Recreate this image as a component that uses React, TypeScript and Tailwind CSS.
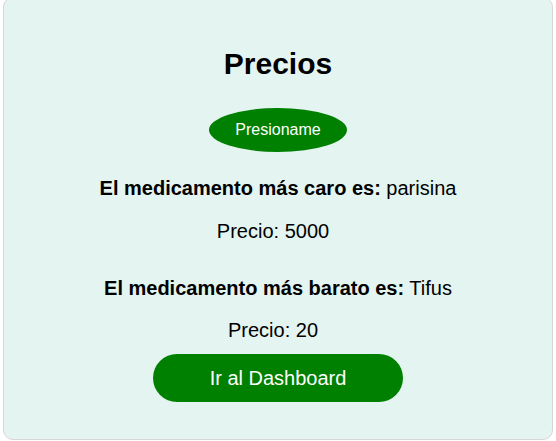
export default function App() {
  return (
    <div className="pl-[3px] font-['Liberation_Sans',Arial,sans-serif] text-black">
      <div className="-mt-[3px] w-[550px] h-[443px] rounded-[10px] border border-[#d6d6d6] bg-[#e4f4f0] flex flex-col items-center pt-[48px]">
        <h1 className="text-[30px] font-bold leading-[35px]">Precios</h1>
        <button className="mt-[27px] w-[138px] h-[44px] rounded-[50%] bg-[#008000] text-white text-[16px]">
          Presioname
        </button>
        <p className="mt-[25px] text-[20px] leading-[23px]">
          <strong>El medicamento más caro es:</strong> parisina
        </p>
        <p className="mt-[20px] pr-[10px] text-[20px] leading-[23px]">Precio: 5000</p>
        <p className="mt-[34px] text-[20px] leading-[23px]">
          <strong>El medicamento más barato es:</strong> Tifus
        </p>
        <p className="mt-[19px] pr-[10px] text-[20px] leading-[23px]">Precio: 20</p>
        <button className="mt-[12px] w-[250px] h-[48px] rounded-full bg-[#008000] text-white text-[20px]">
          Ir al Dashboard
        </button>
      </div>
    </div>
  );
}
